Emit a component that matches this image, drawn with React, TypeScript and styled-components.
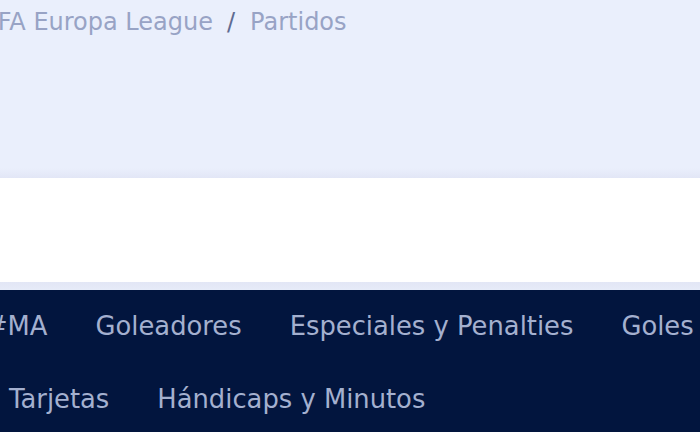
import React from "react";
import styled, { createGlobalStyle } from "styled-components";

const GlobalStyle = createGlobalStyle`
  html, body {
    margin: 0;
    padding: 0;
    overflow: hidden;
    background: #eaeffb;
  }
  body {
    font-family: "DejaVu Sans", Verdana, sans-serif;
  }
`;

const Page = styled.div`
  width: 700px;
  height: 432px;
  overflow: hidden;
  display: flex;
  flex-direction: column;
`;

const Header = styled.header`
  height: 178px;
  flex: none;
  box-sizing: border-box;
  background: linear-gradient(to bottom, #eaeffc 0px, #eaeffc 168px, #e2e6f6 178px);
  overflow: hidden;
`;

const Breadcrumb = styled.nav`
  display: flex;
  align-items: center;
  white-space: nowrap;
  margin-left: -35px;
  padding-top: 7px;
  font-size: 24px;
  line-height: 30px;
  color: #98a3c5;
`;

const Crumb = styled.span`
  color: #98a3c5;
`;

const Sep = styled.span`
  color: #606b92;
  margin: 0 15px 0 14px;
`;

const Panel = styled.section`
  height: 104px;
  flex: none;
  background: #ffffff;
`;

const Strip = styled.div`
  height: 8px;
  flex: none;
  background: linear-gradient(to bottom, #e2e6f5, #e6ebf8);
`;

const TabsNav = styled.nav`
  flex: 1;
  background: #02153e;
  display: flex;
  flex-direction: column;
  overflow: hidden;
`;

const TabRow = styled.div<{ $shift: number }>`
  display: flex;
  height: 73px;
  align-items: center;
  white-space: nowrap;
  margin-left: ${(p) => p.$shift}px;
`;

const Tab = styled.a`
  padding: 0 24px;
  font-size: 25.8px;
  line-height: 73px;
  color: #a4b0cf;
  text-decoration: none;
`;

const rows: { shift: number; tabs: string[] }[] = [
  { shift: -38, tabs: ["#MA", "Goleadores", "Especiales y Penalties", "Goles"] },
  { shift: -15, tabs: ["Tarjetas", "Hándicaps y Minutos"] },
];

export default function App() {
  return (
    <>
      <GlobalStyle />
      <Page>
        <Header>
          <Breadcrumb>
            <Crumb>UEFA Europa League</Crumb>
            <Sep>/</Sep>
            <Crumb>Partidos</Crumb>
          </Breadcrumb>
        </Header>
        <Panel />
        <Strip />
        <TabsNav>
          {rows.map((r, i) => (
            <TabRow key={i} $shift={r.shift}>
              {r.tabs.map((t) => (
                <Tab key={t}>{t}</Tab>
              ))}
            </TabRow>
          ))}
        </TabsNav>
      </Page>
    </>
  );
}
